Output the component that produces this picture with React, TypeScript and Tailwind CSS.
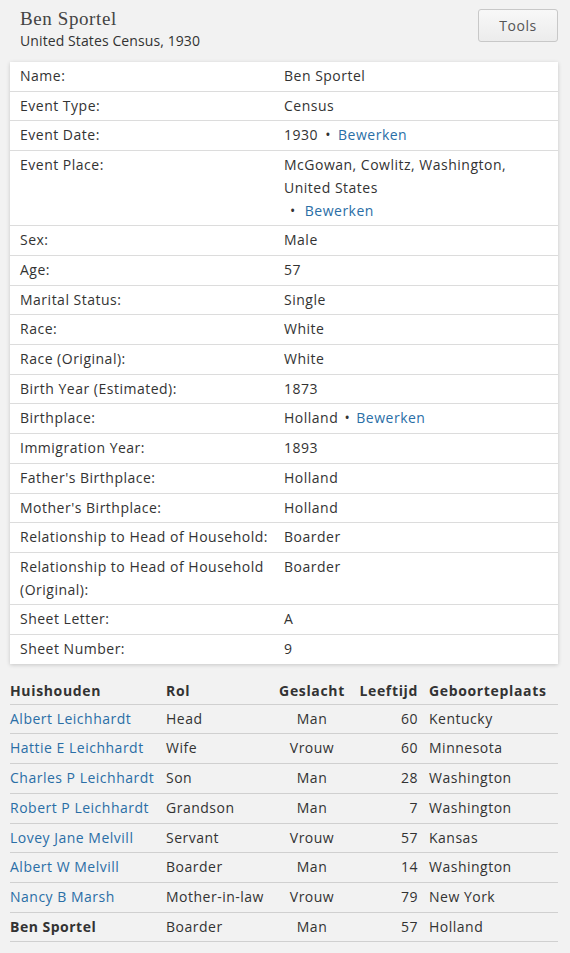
import React from "react";

type Row = { label: string; value: React.ReactNode };

const Link = ({ children }: { children: React.ReactNode }) => (
  <a className="text-[#2a6ea6]">{children}</a>
);

const rows: Row[] = [
  { label: "Name:", value: "Ben Sportel" },
  { label: "Event Type:", value: "Census" },
  { label: "Event Date:", value: <>1930 <span className="mx-[3px]">•</span> <Link>Bewerken</Link></> },
  {
    label: "Event Place:",
    value: (
      <>
        <div>McGowan, Cowlitz, Washington, United States</div>
        <div className="pl-[6px]"><span className="mr-[9px]">•</span><Link>Bewerken</Link></div>
      </>
    ),
  },
  { label: "Sex:", value: "Male" },
  { label: "Age:", value: "57" },
  { label: "Marital Status:", value: "Single" },
  { label: "Race:", value: "White" },
  { label: "Race (Original):", value: "White" },
  { label: "Birth Year (Estimated):", value: "1873" },
  { label: "Birthplace:", value: <>Holland <span className="mx-[2px]">•</span> <Link>Bewerken</Link></> },
  { label: "Immigration Year:", value: "1893" },
  { label: "Father's Birthplace:", value: "Holland" },
  { label: "Mother's Birthplace:", value: "Holland" },
  { label: "Relationship to Head of Household:", value: "Boarder" },
  { label: "Relationship to Head of Household (Original):", value: "Boarder" },
  { label: "Sheet Letter:", value: "A" },
  { label: "Sheet Number:", value: "9" },
];

const household = [
  ["Albert Leichhardt", "Head", "Man", "60", "Kentucky"],
  ["Hattie E Leichhardt", "Wife", "Vrouw", "60", "Minnesota"],
  ["Charles P Leichhardt", "Son", "Man", "28", "Washington"],
  ["Robert P Leichhardt", "Grandson", "Man", "7", "Washington"],
  ["Lovey Jane Melvill", "Servant", "Vrouw", "57", "Kansas"],
  ["Albert W Melvill", "Boarder", "Man", "14", "Washington"],
  ["Nancy B Marsh", "Mother-in-law", "Vrouw", "79", "New York"],
  ["Ben Sportel", "Boarder", "Man", "57", "Holland"],
];

export default function App() {
  return (
    <div
      className="w-[570px] h-[953px] bg-[#f2f2f2] text-[#333] text-[14px] tracking-[0.5px] overflow-hidden"
      style={{ fontFamily: '"Open Sans", "DejaVu Sans", sans-serif' }}
    >
      <div className="flex justify-between pl-[20px] pr-[12px] pt-[8px]">
        <div>
          <div
            className="text-[19px] leading-[22px] text-[#444] tracking-[0.6px]"
            style={{ fontFamily: '"Liberation Serif", "DejaVu Serif", serif' }}
          >
            Ben Sportel
          </div>
          <div className="text-[14px] leading-[22px] text-[#333] tracking-[0.1px]">United States Census, 1930</div>
        </div>
        <button className="mt-[1px] w-[80px] h-[33px] border border-[#c8c8c8] rounded-[3px] bg-gradient-to-b from-[#f8f8f8] to-[#ececec] text-[14px] text-[#555]">
          Tools
        </button>
      </div>

      <div className="mx-[10px] mt-[10px] w-[548px] bg-white shadow-[0_1px_4px_rgba(0,0,0,0.18)]">
        {rows.map((r, i) => (
          <div
            key={i}
            className={`flex leading-[22.7px] pt-[3px] pb-[3px] ${i < rows.length - 1 ? "border-b border-[#dcdcdc]" : ""}`}
          >
            <div className="w-[274px] pl-[10px] pr-[6px]">{r.label}</div>
            <div className="flex-1 pr-[40px]">{r.value}</div>
          </div>
        ))}
      </div>

      <div className="mx-[10px] mt-[14px] w-[548px]">
        <div className="flex font-bold leading-[25px] border-b border-[#d0d0d0] pb-[1px] tracking-[0.65px]">
          <div className="w-[156px]">Huishouden</div>
          <div className="w-[108px]">Rol</div>
          <div className="w-[76px] text-center">Geslacht</div>
          <div className="w-[68px] text-right">Leeftijd</div>
          <div className="flex-1 pl-[11px]">Geboorteplaats</div>
        </div>
        {household.map((h, i) => (
          <div key={i} className="flex leading-[22.7px] py-[3px] border-b border-[#d0d0d0]">
            <div className={`w-[156px] ${i === household.length - 1 ? "font-bold" : "text-[#2a6ea6]"}`}>{h[0]}</div>
            <div className="w-[108px]">{h[1]}</div>
            <div className="w-[76px] text-center">{h[2]}</div>
            <div className="w-[68px] text-right">{h[3]}</div>
            <div className="flex-1 pl-[11px]">{h[4]}</div>
          </div>
        ))}
      </div>
    </div>
  );
}
